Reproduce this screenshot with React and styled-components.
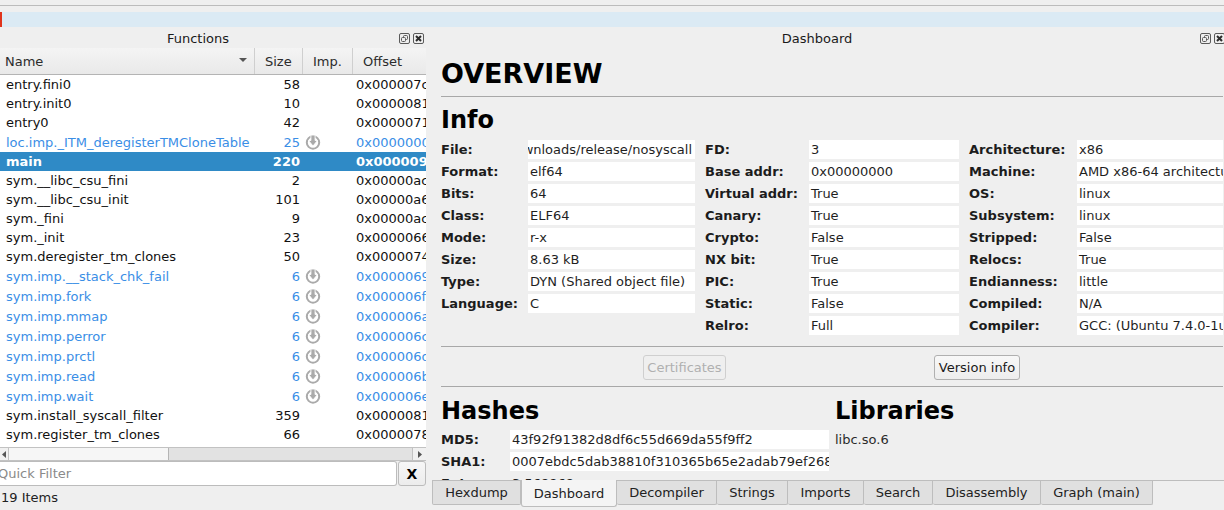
import React from 'react';
import styled, { createGlobalStyle } from 'styled-components';

const GlobalStyle = createGlobalStyle`
  html, body {
    margin: 0;
    padding: 0;
    height: 510px;
    overflow: hidden;
    background: #efefef;
  }
  body {
    font-family: 'DejaVu Sans', sans-serif;
    font-size: 13px;
    color: #000;
  }
`;

const Window = styled.div`
  width: 1224px;
  height: 510px;
  overflow: hidden;
  display: flex;
  flex-direction: column;
  background: #efefef;
`;

const MenuRule = styled.div`
  height: 1px;
  margin-top: 5px;
  background: #bcbcbc;
`;

const Overview = styled.div`
  height: 15px;
  margin-top: 6px;
  background: #dbeaf4;
  display: flex;
`;

const OverviewMarker = styled.div`
  width: 2px;
  background: #e0341c;
`;

const Docks = styled.div`
  flex: 1;
  min-height: 0;
  display: flex;
  gap: 6px;
`;

const FunctionsDock = styled.div`
  width: 426px;
  display: flex;
  flex-direction: column;
`;

const DashboardDock = styled.div`
  flex: 1;
  min-width: 0;
  display: flex;
  flex-direction: column;
`;

const TitleBar = styled.div`
  flex: none;
  height: 21px;
  box-sizing: border-box;
  padding: 2px ${({ $inset }) => $inset}px 0 0;
  position: relative;
  display: flex;
  align-items: center;
  justify-content: center;
  font-size: 13px;
  color: #1a1a1a;
`;

const TitleButtons = styled.div`
  position: absolute;
  right: ${({ $right }) => $right}px;
  top: 6px;
  display: flex;
  gap: 3px;
`;

const FloatIcon = () => (
  <svg width="11" height="11" viewBox="0 0 11 11" fill="none" stroke="#5a5a5a">
    <rect x="0.5" y="0.5" width="10" height="10" rx="1.500" />
    <rect x="4.500" y="2.500" width="4" height="4" rx="1" />
    <rect x="2.500" y="4.500" width="4" height="4" rx="1" fill="#efefef" />
  </svg>
);

const CloseIcon = () => (
  <svg width="11" height="11" viewBox="0 0 11 11" fill="none" stroke="#5a5a5a">
    <rect x="0.5" y="0.5" width="10" height="10" rx="1.500" />
    <path d="M3 3l5 5M8 3l-5 5" stroke="#2c2c2c" strokeWidth="2" />
  </svg>
);

const Table = styled.div`
  flex: none;
  height: 413px;
  width: 426px;
  background: #fff;
  overflow: hidden;
  display: flex;
  flex-direction: column;
`;

const HeaderRow = styled.div`
  flex: none;
  height: 26px;
  display: grid;
  grid-template-columns: 255px 48px 50px 73px;
  background: linear-gradient(#f4f4f4, #e9e9e9);
  border-bottom: 1px solid #b4b4b4;
`;

const HeaderCell = styled.div`
  position: relative;
  display: flex;
  align-items: center;
  padding-left: ${({ $pad }) => $pad}px;
  border-right: 1px solid #cfcfcf;
  color: #2b2b2b;
  &:last-child {
    border-right: none;
  }
`;

const SortArrow = styled.span`
  position: absolute;
  right: 7px;
  top: 10px;
  width: 0;
  height: 0;
  border-left: 4px solid transparent;
  border-right: 4px solid transparent;
  border-top: 4px solid #555;
`;

const Rows = styled.div`
  flex: 1;
  min-height: 0;
  overflow: hidden;
`;

const Row = styled.div`
  height: ${({ $imp }) => ($imp ? 20 : 19)}px;
  display: grid;
  grid-template-columns: 255px 45px 51px 75px;
  align-items: center;
  white-space: nowrap;
  color: ${({ $selected, $imp }) => ($selected ? '#fff' : $imp ? '#3a8ee6' : '#111')};
  background: ${({ $selected }) => ($selected ? '#2f8ac6' : 'transparent')};
  font-weight: ${({ $selected }) => ($selected ? 700 : 400)};
`;

const NameCell = styled.div`
  padding-left: 6px;
  overflow: hidden;
`;

const SizeCell = styled.div`
  text-align: right;
`;

const ImpCell = styled.div`
  padding-left: 5px;
  display: flex;
  align-items: center;
`;

const OffsetCell = styled.div`
  overflow: hidden;
  padding-left: 5px;
`;

const ImportIcon = () => (
  <svg width="16" height="16" viewBox="0 0 16 16" fill="none">
    <circle cx="8" cy="8.500" r="6.200" stroke="#aaaaaa" strokeWidth="2" />
    <path d="M5.900 1v5.500H3.500L8 12l4.500-5.500h-2.400V1z" fill="#aaaaaa" stroke="#fff" strokeWidth="0.900" />
  </svg>
);

const ScrollBar = styled.div`
  flex: none;
  height: 14px;
  box-sizing: border-box;
  display: flex;
  align-items: stretch;
  background: #e2e2e2;
  border-top: 1px solid #c2c2c2;
  border-bottom: 1px solid #c2c2c2;
`;

const ScrollArrow = styled.div`
  width: 8px;
  display: flex;
  align-items: center;
  justify-content: center;
  background: #f0f0f0;
  &:last-child {
    width: 13px;
    margin-left: auto;
    border-left: 1px solid #c2c2c2;
  }
`;

const ScrollThumb = styled.div`
  width: 159px;
  background: #f6f6f6;
  border-left: 1px solid #c2c2c2;
  border-right: 1px solid #b5b5b5;
`;

const FilterRow = styled.div`
  flex: none;
  height: 25px;
  display: flex;
  gap: 1px;
`;

const FilterInput = styled.div`
  width: 397px;
  background: #fff;
  border: 1px solid #bcbcbc;
  border-left: none;
  border-radius: 0 3px 3px 0;
  color: #8a8a8a;
  display: flex;
  align-items: center;
  text-indent: -2px;
  box-sizing: border-box;
`;

const FilterButton = styled.div`
  width: 28px;
  box-sizing: border-box;
  background: linear-gradient(#f7f7f7, #ececec);
  border: 1px solid #bcbcbc;
  border-radius: 3px;
  display: flex;
  align-items: center;
  justify-content: center;
  font-weight: 700;
  font-size: 14px;
`;

const StatusLine = styled.div`
  flex: none;
  height: 22px;
  padding-left: 1px;
  display: flex;
  align-items: center;
  color: #222;
`;

const DashContent = styled.div`
  flex: 1;
  min-height: 0;
  overflow: hidden;
  padding: 10px 1px 0 9px;
`;

const PageTitle = styled.h1`
  margin: 0;
  height: 38px;
  font-size: 27px;
  line-height: 32px;
  font-weight: 700;
  color: #000;
`;

const Rule = styled.div`
  height: 1px;
  background: #a8a8a8;
`;

const Heading = styled.h2`
  margin: 0;
  font-size: 24px;
  line-height: 29px;
  font-weight: 700;
`;

const InfoSection = styled.div`
  padding-top: 9px;
  height: 249px;
  box-sizing: border-box;
`;

const InfoGrid = styled.div`
  margin-top: 5px;
  display: grid;
  grid-template-columns: 87px 167px 10px 104px 150px 10px 108px 146px;
  grid-auto-rows: 19px;
  row-gap: 3px;
  white-space: nowrap;
`;

const Label = styled.div`
  font-weight: 700;
  line-height: 19px;
  grid-column: ${({ $col }) => $col};
  color: #1c1c1c;
`;

const Value = styled.div`
  background: #fff;
  line-height: 19px;
  padding: 0 ${({ $clipped }) => ($clipped ? 3 : 0)}px 0 ${({ $clipped }) => ($clipped ? 0 : 2)}px;
  overflow: hidden;
  grid-column: ${({ $col }) => $col};
  color: #1f1f1f;
  display: flex;
  justify-content: ${({ $clipped }) => ($clipped ? 'flex-end' : 'flex-start')};
`;

const ButtonRow = styled.div`
  height: 39px;
  box-sizing: border-box;
  padding-top: 2px;
  display: grid;
  grid-template-columns: 202px 83px 208px 86px;
  align-items: center;
`;

const PushButton = styled.div`
  grid-column: ${({ $col }) => $col};
  height: 25px;
  box-sizing: border-box;
  border: 1px solid ${({ $disabled }) => ($disabled ? '#cfcfcf' : '#b0b0b0')};
  border-radius: 3px;
  background: ${({ $disabled }) => ($disabled ? 'transparent' : 'linear-gradient(#f8f8f8, #ededed)')};
  color: ${({ $disabled }) => ($disabled ? '#b0b0b0' : '#1a1a1a')};
  display: flex;
  align-items: center;
  justify-content: center;
  white-space: nowrap;
`;

const LowerSection = styled.div`
  padding-top: 10px;
  display: grid;
  grid-template-columns: 394px 1fr;
`;

const HashGrid = styled.div`
  margin-top: 4px;
  display: grid;
  grid-template-columns: 69px 319px;
  grid-auto-rows: 19px;
  row-gap: 3px;
  white-space: nowrap;
`;

const HashValue = styled.div`
  background: ${({ $plain }) => ($plain ? 'transparent' : '#fff')};
  line-height: 19px;
  padding-left: 2px;
  overflow: hidden;
  color: #1f1f1f;
`;

const LibraryLine = styled.div`
  margin-top: 4px;
  line-height: 19px;
  color: #2b2b2b;
`;

const TabBar = styled.div`
  flex: none;
  height: 30px;
  box-sizing: border-box;
  display: flex;
  align-items: flex-start;
  background: #efefef;
  border-top: 1px solid #bdbdbd;
`;

const Tab = styled.div`
  box-sizing: border-box;
  width: ${({ $w }) => $w}px;
  height: ${({ $active }) => ($active ? 27 : 24)}px;
  margin-top: ${({ $active }) => ($active ? -1 : 0)}px;
  display: flex;
  align-items: center;
  justify-content: center;
  border: 1px solid #bdbdbd;
  border-top: none;
  border-left: ${({ $first, $active }) => ($first || $active ? '1px solid #bdbdbd' : 'none')};
  border-radius: ${({ $active }) => ($active ? '0 0 3px 3px' : '0 0 2px 2px')};
  background: ${({ $active }) => ($active ? '#f4f4f4' : '#e0e0e0')};
  color: #222;
`;

const functions = [
  ['entry.fini0', 58, '0x000007c0'],
  ['entry.init0', 10, '0x00000810'],
  ['entry0', 42, '0x00000710'],
  ['loc.imp._ITM_deregisterTMCloneTable', 25, '0x00000000', 'imp'],
  ['main', 220, '0x00000900', 'sel'],
  ['sym.__libc_csu_fini', 2, '0x00000ac0'],
  ['sym.__libc_csu_init', 101, '0x00000a60'],
  ['sym._fini', 9, '0x00000ac4'],
  ['sym._init', 23, '0x00000668'],
  ['sym.deregister_tm_clones', 50, '0x00000740'],
  ['sym.imp.__stack_chk_fail', 6, '0x00000690', 'imp'],
  ['sym.imp.fork', 6, '0x000006f0', 'imp'],
  ['sym.imp.mmap', 6, '0x000006a0', 'imp'],
  ['sym.imp.perror', 6, '0x000006c0', 'imp'],
  ['sym.imp.prctl', 6, '0x000006d0', 'imp'],
  ['sym.imp.read', 6, '0x000006b0', 'imp'],
  ['sym.imp.wait', 6, '0x000006e0', 'imp'],
  ['sym.install_syscall_filter', 359, '0x00000819'],
  ['sym.register_tm_clones', 66, '0x00000780'],
];

const info = [
  ['File:', '/home/user/Downloads/release/nosyscall', 'FD:', '3', 'Architecture:', 'x86'],
  ['Format:', 'elf64', 'Base addr:', '0x00000000', 'Machine:', 'AMD x86-64 architecture'],
  ['Bits:', '64', 'Virtual addr:', 'True', 'OS:', 'linux'],
  ['Class:', 'ELF64', 'Canary:', 'True', 'Subsystem:', 'linux'],
  ['Mode:', 'r-x', 'Crypto:', 'False', 'Stripped:', 'False'],
  ['Size:', '8.63 kB', 'NX bit:', 'True', 'Relocs:', 'True'],
  ['Type:', 'DYN (Shared object file)', 'PIC:', 'True', 'Endianness:', 'little'],
  ['Language:', 'C', 'Static:', 'False', 'Compiled:', 'N/A'],
  [null, null, 'Relro:', 'Full', 'Compiler:', 'GCC: (Ubuntu 7.4.0-1ubuntu1~18.04) 7.4.0'],
];

const tabs = [
  ['Hexdump', 89],
  ['Dashboard', 96],
  ['Decompiler', 100],
  ['Strings', 71],
  ['Imports', 76],
  ['Search', 69],
  ['Disassembly', 108],
  ['Graph (main)', 112],
];

const App = () => (
  <Window>
    <GlobalStyle />
    <MenuRule />
    <Overview>
      <OverviewMarker />
    </Overview>
    <Docks>
      <FunctionsDock>
        <TitleBar $inset={30}>
          Functions
          <TitleButtons $right={2}>
            <FloatIcon />
            <CloseIcon />
          </TitleButtons>
        </TitleBar>
        <Table>
          <HeaderRow>
            <HeaderCell $pad={5}>
              Name
              <SortArrow />
            </HeaderCell>
            <HeaderCell $pad={10}>Size</HeaderCell>
            <HeaderCell $pad={10}>Imp.</HeaderCell>
            <HeaderCell $pad={10}>Offset</HeaderCell>
          </HeaderRow>
          <Rows>
            {functions.map(([name, size, offset, kind]) => (
              <Row key={name} $imp={kind === 'imp'} $selected={kind === 'sel'}>
                <NameCell>{name}</NameCell>
                <SizeCell>{size}</SizeCell>
                <ImpCell>{kind === 'imp' && <ImportIcon />}</ImpCell>
                <OffsetCell>{offset}</OffsetCell>
              </Row>
            ))}
          </Rows>
          <ScrollBar>
            <ScrollArrow>
              <svg width="4" height="7" viewBox="0 0 4 7">
                <path d="M4 0v7L0 3.500z" fill="#555" />
              </svg>
            </ScrollArrow>
            <ScrollThumb />
            <ScrollArrow>
              <svg width="4" height="7" viewBox="0 0 4 7">
                <path d="M0 0v7l4-3.500z" fill="#555" />
              </svg>
            </ScrollArrow>
          </ScrollBar>
        </Table>
        <FilterRow>
          <FilterInput>Quick Filter</FilterInput>
          <FilterButton>X</FilterButton>
        </FilterRow>
        <StatusLine>19 Items</StatusLine>
      </FunctionsDock>
      <DashboardDock>
        <TitleBar $inset={22}>
          Dashboard
          <TitleButtons $right={-1}>
            <FloatIcon />
            <CloseIcon />
          </TitleButtons>
        </TitleBar>
        <DashContent>
          <PageTitle>OVERVIEW</PageTitle>
          <Rule />
          <InfoSection>
            <Heading>Info</Heading>
            <InfoGrid>
              {info.map(([a, av, b, bv, c, cv], i) => (
                <React.Fragment key={i}>
                  {a && <Label $col={1}>{a}</Label>}
                  {av && (
                    <Value $col={2} $clipped={i === 0}>
                      {av}
                    </Value>
                  )}
                  <Label $col={4}>{b}</Label>
                  <Value $col={5}>{bv}</Value>
                  <Label $col={7}>{c}</Label>
                  <Value $col={8}>{cv}</Value>
                </React.Fragment>
              ))}
            </InfoGrid>
          </InfoSection>
          <Rule />
          <ButtonRow>
            <PushButton $col={2} $disabled>
              Certificates
            </PushButton>
            <PushButton $col={4}>Version info</PushButton>
          </ButtonRow>
          <Rule />
          <LowerSection>
            <div>
              <Heading>Hashes</Heading>
              <HashGrid>
                <Label>MD5:</Label>
                <HashValue>43f92f91382d8df6c55d669da55f9ff2</HashValue>
                <Label>SHA1:</Label>
                <HashValue>0007ebdc5dab38810f310365b65e2adab79ef268a1c4</HashValue>
                <Label>Entropy:</Label>
                <HashValue $plain>3.568868</HashValue>
              </HashGrid>
            </div>
            <div>
              <Heading>Libraries</Heading>
              <LibraryLine>libc.so.6</LibraryLine>
            </div>
          </LowerSection>
        </DashContent>
        <TabBar>
          {tabs.map(([name, w], i) => (
            <Tab key={name} $w={w} $first={i === 0} $active={name === 'Dashboard'}>
              {name}
            </Tab>
          ))}
        </TabBar>
      </DashboardDock>
    </Docks>
  </Window>
);

export default App;
